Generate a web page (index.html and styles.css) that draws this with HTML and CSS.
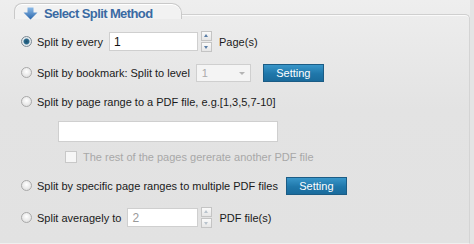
FILE: index.html
```html
<!DOCTYPE html>
<html lang="en">
<head>
  <meta charset="UTF-8" />
  <title>Select Split Method</title>
  <link rel="stylesheet" href="styles.css">
</head>
<body>
  <div class="panel">
    <div class="head">
      <div class="tab">
        <svg class="tab-icon" width="15" height="13" viewBox="0 0 15 13">
          <defs>
            <linearGradient id="ag" x1="0" y1="0" x2="0" y2="1">
              <stop offset="0" stop-color="#8dbbe8"/>
              <stop offset="1" stop-color="#2a66ab"/>
            </linearGradient>
          </defs>
          <path d="M4.5 0.5h6v5h4l-7 7l-7-7h4z" fill="url(#ag)"/>
        </svg>
        <span>Select Split Method</span>
      </div>
      <div class="head-line"></div>
    </div>

    <div class="body">
      <div class="row r1">
        <span class="radio checked"></span>
        <span>Split by every</span>
        <input class="num" value="1">
        <span class="spin"><i class="up"></i><i class="down"></i></span>
        <span>Page(s)</span>
      </div>

      <div class="row r2">
        <span class="radio"></span>
        <span>Split by bookmark: Split to level</span>
        <span class="select">1<i class="caret"></i></span>
        <button class="btn">Setting</button>
      </div>

      <div class="row r3">
        <span class="radio"></span>
        <span>Split by page range to a PDF file, e.g.[1,3,5,7-10]</span>
      </div>

      <div class="sub">
        <input class="range">
        <label class="check"><span class="box"></span>The rest of the pages gererate another PDF file</label>
      </div>

      <div class="row r4">
        <span class="radio"></span>
        <span>Split by specific page ranges to multiple PDF files</span>
        <button class="btn">Setting</button>
      </div>

      <div class="row r5">
        <span class="radio"></span>
        <span>Split averagely to</span>
        <input class="num small" value="2">
        <span class="spin dim"><i class="up"></i><i class="down"></i></span>
        <span>PDF file(s)</span>
      </div>
    </div>
  </div>
</body>
</html>
```

FILE: styles.css
```css
body {
  margin: 0;
  background: #e4e4e4;
  font-family: "Liberation Sans", Arial, sans-serif;
  font-size: 11px;
  color: #1a1a1a;
}
.panel {
  width: 470px;
  height: 244px;
  display: flex;
  flex-direction: column;
  background: linear-gradient(#eeeeee, #e3e3e3 45%, #e2e2e2);
}
.head {
  display: flex;
  align-items: flex-end;
  height: 19px;
  padding-left: 14px;
}
.tab {
  width: 168px;
  height: 16px;
  border: 1px solid #c9c9c9;
  border-bottom: none;
  border-radius: 8px 10px 0 0;
  background: #f2f2f2;
  display: flex;
  align-items: center;
  gap: 6px;
  padding-left: 8px;
  box-sizing: border-box;
  box-shadow: inset 0 1px 0 #fff;
}
.tab span {
  font-size: 13px;
  font-weight: bold;
  letter-spacing: -0.6px;
  color: #3a6aa3;
  margin-top: 3px;
}
.tab-icon { margin-top: 4px; }
.head-line {
  flex: 1;
  height: 4px;
  border-top: 1px solid #cfcfcf;
  border-right: 1px solid #cfcfcf;
  border-radius: 0 5px 0 0;
  box-shadow: inset 0 1px 0 #fafafa;
}
.body {
  flex: 1;
  border-right: 1px solid #d4d4d4;
  border-bottom: 1px solid #efefef;
  padding-left: 21px;
  display: flex;
  flex-direction: column;
}
.row {
  display: flex;
  align-items: center;
  height: 19px;
  gap: 5px;
}
.r1 { margin-top: 13px; }
.r2 { margin-top: 12px; }
.r3 { margin-top: 10px; }
.r4 { margin-top: 13px; }
.r5 { margin-top: 13px; }
.radio {
  width: 11px;
  height: 11px;
  border-radius: 50%;
  border: 1px solid #a9a9a9;
  background: radial-gradient(circle at 50% 40%, #ffffff, #d8d8d8);
  box-sizing: border-box;
}
.radio.checked {
  border-color: #7d8a94;
  background: radial-gradient(circle, #1c4f6e 0, #2c6c8e 2.5px, #e9eef1 3.5px, #c9d0d5 100%);
}
.num {
  width: 89px;
  height: 19px;
  box-sizing: border-box;
  border: 1px solid #cfcfcf;
  background: #fff;
  font: 12px "Liberation Sans", Arial, sans-serif;
  padding: 0 4px;
  margin-left: 1px;
  color: #111;
}
.num.small { width: 71px; color: #999; }
.spin {
  display: flex;
  flex-direction: column;
  gap: 1px;
  margin: 0 2px 0 -2px;
}
.spin i {
  width: 9px;
  height: 8px;
  border: 1px solid #c4c4c4;
  background: linear-gradient(#fafafa, #e6e6e6);
  position: relative;
}
.spin i::after {
  content: "";
  position: absolute;
  left: 2px;
  border-left: 2.5px solid transparent;
  border-right: 2.5px solid transparent;
}
.spin .up::after { top: 2px; border-bottom: 3px solid #5a7da5; }
.spin .down::after { top: 3px; border-top: 3px solid #5a7da5; }
.spin.dim .up::after { border-bottom-color: #b9c3cc; }
.spin.dim .down::after { border-top-color: #b9c3cc; }
.select {
  width: 55px;
  height: 18px;
  box-sizing: border-box;
  border: 1px solid #cfcfcf;
  background: #f4f4f4;
  color: #aaa;
  padding-left: 5px;
  display: flex;
  align-items: center;
  position: relative;
  margin-left: 1px;
}
.caret {
  position: absolute;
  right: 5px;
  top: 7px;
  border-left: 3px solid transparent;
  border-right: 3px solid transparent;
  border-top: 3px solid #b4b4b4;
}
.btn {
  width: 61px;
  height: 18px;
  border: 1px solid #1b5c85;
  background: linear-gradient(#3996c9, #1f77aa 55%, #1a6b9c);
  color: #fff;
  font: 11px "Liberation Sans", Arial, sans-serif;
  margin-left: 7px;
  padding: 0;
}
.r4 .btn { margin-left: 3px; }
.sub {
  padding-left: 37px;
  display: flex;
  flex-direction: column;
}
.range {
  width: 220px;
  height: 21px;
  box-sizing: border-box;
  border: 1px solid #cfcfcf;
  background: #fff;
  margin-top: 10px;
}
.check {
  display: flex;
  align-items: center;
  gap: 6px;
  color: #a8a8a8;
  margin-top: 8px;
  margin-left: 7px;
  height: 13px;
}
.box {
  width: 10px;
  height: 10px;
  border: 1px solid #c8c8c8;
  background: #f6f6f6;
}
```
